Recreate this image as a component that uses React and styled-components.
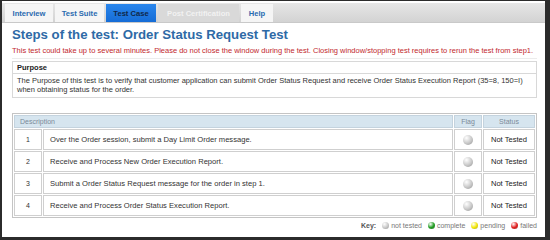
import styled, { createGlobalStyle } from "styled-components";

const GlobalStyle = createGlobalStyle`
  html, body { margin: 0; padding: 0; background: #2b2b2b; }
  body { font-family: "Liberation Sans", Arial, sans-serif; }
`;

const tabs = [
  { label: "Interview", state: "normal", width: 48 },
  { label: "Test Suite", state: "normal", width: 49 },
  { label: "Test Case", state: "active", width: 50 },
  { label: "Post Certification", state: "disabled", width: 81 },
  { label: "Help", state: "normal", width: 32 },
];

const steps = [
  "Over the Order session, submit a Day Limit Order message.",
  "Receive and Process New Order Execution Report.",
  "Submit a Order Status Request message for the order in step 1.",
  "Receive and Process Order Status Execution Report.",
];

const legend = [
  { color: "#c8c8c8", label: "not tested" },
  { color: "#1a9a1a", label: "complete" },
  { color: "#f2e600", label: "pending" },
  { color: "#e01818", label: "failed" },
];

export default function App() {
  return (
    <>
      <GlobalStyle />
      <Frame>
        <Page>
          <TabBar>
            {tabs.map((t) => (
              <Tab key={t.label} $state={t.state} $width={t.width}>{t.label}</Tab>
            ))}
          </TabBar>

          <Content>
            <Title>Steps of the test: Order Status Request Test</Title>
            <Warning>
              This test could take up to several minutes. Please do not close the window during the test. Closing window/stopping test requires to rerun the test from step1.
            </Warning>

            <PurposeBox>
              <PurposeHead>Purpose</PurposeHead>
              <PurposeText>
                The Purpose of this test is to verify that customer application can submit Order Status Request and receive Order Status Execution Report (35=8, 150=I) when obtaining status for the order.
              </PurposeText>
            </PurposeBox>

            <StepsTable>
              <thead>
                <tr>
                  <HeadCell colSpan={2} $align="left">Description</HeadCell>
                  <HeadCell>Flag</HeadCell>
                  <HeadCell>Status</HeadCell>
                </tr>
              </thead>
              <tbody>
                {steps.map((s, i) => (
                  <tr key={i}>
                    <NumCell>{i + 1}</NumCell>
                    <DescCell>{s}</DescCell>
                    <FlagCell><Ball $color="#c8c8c8" $size={10} /></FlagCell>
                    <StatusCell>Not Tested</StatusCell>
                  </tr>
                ))}
              </tbody>
            </StepsTable>

            <Legend>
              <LegendKey>Key:</LegendKey>
              {legend.map((l) => (
                <LegendItem key={l.label}>
                  <Ball $color={l.color} $size={7} />
                  {l.label}
                </LegendItem>
              ))}
            </Legend>
          </Content>
        </Page>
      </Frame>
    </>
  );
}

const Frame = styled.div`
  width: 550px;
  height: 240px;
  box-sizing: border-box;
  padding: 1px 5px 3px 2px;
  background: #2b2b2b;
`;

const Page = styled.div`
  height: 100%;
  background: #ffffff;
  overflow: hidden;
`;

const TabBar = styled.div`
  display: flex;
  align-items: stretch;
  gap: 2px;
  height: 19px;
  margin-top: 2px;
  padding-left: 3px;
  background: linear-gradient(#e6e6e6, #d3d3d3);
  border-bottom: 1px solid #c9c9c9;
`;

const tabColors = {
  normal: { bg: "#f5f5f5", fg: "#2a6bb0" },
  active: { bg: "linear-gradient(#2a86ec, #156cd6)", fg: "#10284a" },
  disabled: { bg: "#d9d9d9", fg: "#f2f2f2" },
};

const Tab = styled.div`
  display: flex;
  align-items: center;
  justify-content: center;
  width: ${(p) => p.$width}px;
  margin-top: 1px;
  font-size: 7.6px;
  font-weight: bold;
  white-space: nowrap;
  background: ${(p) => tabColors[p.$state].bg};
  color: ${(p) => tabColors[p.$state].fg};
`;

const Content = styled.div`
  padding: 0 8px 0 10px;
`;

const Title = styled.h1`
  margin: 4px 0 0;
  font-size: 13.2px;
  line-height: 16px;
  font-weight: bold;
  color: #2e6aa6;
`;

const Warning = styled.p`
  margin: 3px 0 0;
  padding-bottom: 3px;
  font-size: 7.5px;
  line-height: 9px;
  color: #c2282e;
  border-bottom: 1px solid #ececec;
`;

const PurposeBox = styled.div`
  margin-top: 2px;
  border: 1px solid #d8d8d8;
`;

const PurposeHead = styled.div`
  padding: 1px 4px;
  line-height: 9px;
  font-size: 7.5px;
  font-weight: bold;
  color: #222;
  border-bottom: 1px solid #d8d8d8;
`;

const PurposeText = styled.div`
  padding: 2px 4px 3px;
  font-size: 7.5px;
  line-height: 9px;
  color: #333;
`;

const StepsTable = styled.table`
  width: 100%;
  margin-top: 15px;
  border: 1px solid #c4c4c4;
  border-spacing: 1px;
  font-size: 7.6px;
  color: #333;
`;

const HeadCell = styled.th`
  height: 11px;
  padding: 0 5px;
  font-weight: normal;
  font-size: 7px;
  text-align: ${(p) => p.$align || "center"};
  color: #7b8a99;
  background: #d6e5ef;
  border: 1px solid #c4d3de;
`;

const Cell = styled.td`
  height: 19px;
  padding: 0;
  border: 1px solid #cfcfcf;
`;

const NumCell = styled(Cell)`
  width: 26px;
  text-align: center;
  font-size: 7px;
`;

const DescCell = styled(Cell)`
  padding: 0 6px;
`;

const FlagCell = styled(Cell)`
  width: 26px;
  text-align: center;
  line-height: 0;
`;

const StatusCell = styled(Cell)`
  width: 50px;
  text-align: center;
  color: #222;
`;

const Ball = styled.span`
  display: inline-block;
  width: ${(p) => p.$size}px;
  height: ${(p) => p.$size}px;
  border-radius: 50%;
  background: radial-gradient(circle at 35% 30%, #ffffff 0%, ${(p) => p.$color} 55%, #777 120%);
`;

const Legend = styled.div`
  display: flex;
  justify-content: flex-end;
  align-items: center;
  gap: 6px;
  margin-top: 4px;
  font-size: 7px;
  color: #777;
`;

const LegendKey = styled.span`
  font-weight: bold;
  color: #555;
`;

const LegendItem = styled.span`
  display: flex;
  align-items: center;
  gap: 2px;
`;
